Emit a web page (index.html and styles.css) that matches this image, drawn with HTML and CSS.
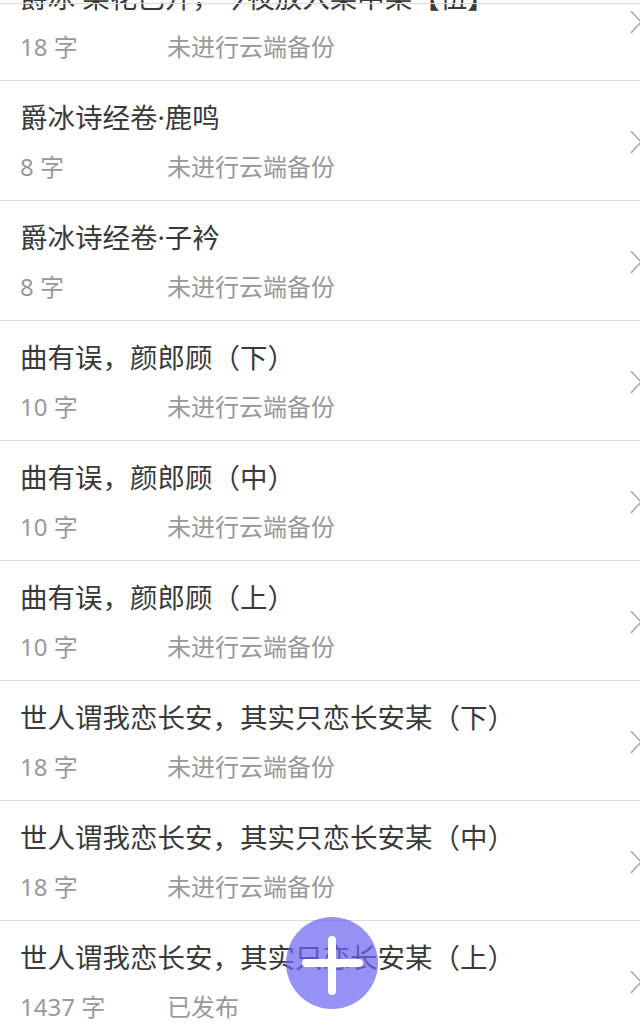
FILE: index.html
```html
<!DOCTYPE html>
<html lang="zh-CN">
<head>
    <meta charset="UTF-8">
    <meta name="viewport" content="width=device-width, initial-scale=1.0">
    <title>作品列表</title>
    <link rel="stylesheet" href="styles.css">
</head>
<body>
    <div class="top-line"></div>

    <ul class="work-list">
        <li class="work-item">
            <div class="work-info">
                <div class="work-title">爵冰·某花已开，今夜放入某中某【伍】</div>
                <div class="work-meta"><span class="work-count">18 字</span><span>未进行云端备份</span></div>
            </div>
            <svg class="chevron" viewBox="0 0 12 24"><polyline points="1,1 11,12 1,23"/></svg>
        </li>
        <li class="work-item">
            <div class="work-info">
                <div class="work-title">爵冰诗经卷·鹿鸣</div>
                <div class="work-meta"><span class="work-count">8 字</span><span>未进行云端备份</span></div>
            </div>
            <svg class="chevron" viewBox="0 0 12 24"><polyline points="1,1 11,12 1,23"/></svg>
        </li>
        <li class="work-item">
            <div class="work-info">
                <div class="work-title">爵冰诗经卷·子衿</div>
                <div class="work-meta"><span class="work-count">8 字</span><span>未进行云端备份</span></div>
            </div>
            <svg class="chevron" viewBox="0 0 12 24"><polyline points="1,1 11,12 1,23"/></svg>
        </li>
        <li class="work-item">
            <div class="work-info">
                <div class="work-title">曲有误，颜郎顾（下）</div>
                <div class="work-meta"><span class="work-count">10 字</span><span>未进行云端备份</span></div>
            </div>
            <svg class="chevron" viewBox="0 0 12 24"><polyline points="1,1 11,12 1,23"/></svg>
        </li>
        <li class="work-item">
            <div class="work-info">
                <div class="work-title">曲有误，颜郎顾（中）</div>
                <div class="work-meta"><span class="work-count">10 字</span><span>未进行云端备份</span></div>
            </div>
            <svg class="chevron" viewBox="0 0 12 24"><polyline points="1,1 11,12 1,23"/></svg>
        </li>
        <li class="work-item">
            <div class="work-info">
                <div class="work-title">曲有误，颜郎顾（上）</div>
                <div class="work-meta"><span class="work-count">10 字</span><span>未进行云端备份</span></div>
            </div>
            <svg class="chevron" viewBox="0 0 12 24"><polyline points="1,1 11,12 1,23"/></svg>
        </li>
        <li class="work-item">
            <div class="work-info">
                <div class="work-title">世人谓我恋长安，其实只恋长安某（下）</div>
                <div class="work-meta"><span class="work-count">18 字</span><span>未进行云端备份</span></div>
            </div>
            <svg class="chevron" viewBox="0 0 12 24"><polyline points="1,1 11,12 1,23"/></svg>
        </li>
        <li class="work-item">
            <div class="work-info">
                <div class="work-title">世人谓我恋长安，其实只恋长安某（中）</div>
                <div class="work-meta"><span class="work-count">18 字</span><span>未进行云端备份</span></div>
            </div>
            <svg class="chevron" viewBox="0 0 12 24"><polyline points="1,1 11,12 1,23"/></svg>
        </li>
        <li class="work-item">
            <div class="work-info">
                <div class="work-title">世人谓我恋长安，其实只恋长安某（上）</div>
                <div class="work-meta"><span class="work-count">1437 字</span><span>已发布</span></div>
            </div>
            <svg class="chevron" viewBox="0 0 12 24"><polyline points="1,1 11,12 1,23"/></svg>
        </li>
    </ul>

    <!-- Add button -->
    <button class="fab" aria-label="新建">
        <svg viewBox="0 0 92 92"><path d="M46 23 V74 M20 46 H73"/></svg>
    </button>
</body>
</html>
```
FILE: styles.css
```css
:root {
    --title: #3a3a3a;
    --meta: #999999;
    --line: #dcdcdc;
}

* {
    box-sizing: border-box;
}

body {
    margin: 0;
    background: #ffffff;
    font-family: "Noto Sans", "Noto Sans CJK SC", sans-serif;
    overflow: hidden;
}

/* Header edge */
.top-line {
    position: fixed;
    top: 3px;
    left: 0;
    right: 0;
    height: 1px;
    background: var(--line);
    z-index: 2;
}

/* List */
.work-list {
    list-style: none;
    margin: -39px 0 0;
    padding: 0;
}

.work-item {
    display: flex;
    align-items: center;
    height: 120px;
    padding: 21px 0 19px 20px;
    border-bottom: 1px solid var(--line);
}

.work-info {
    flex: 1;
    min-width: 0;
}

.work-title {
    font-size: 27.5px;
    line-height: 32px;
    color: var(--title);
    white-space: nowrap;
}

.work-meta {
    margin-top: 19px;
    font-size: 24px;
    line-height: 28px;
    color: var(--meta);
    white-space: nowrap;
}

.work-count {
    display: inline-block;
    width: 147px;
}

.chevron {
    width: 12px;
    height: 24px;
    margin-right: -2px;
    flex-shrink: 0;
    fill: none;
    stroke: #aaaaaa;
    stroke-width: 1.6;
}

/* Floating add button */
.fab {
    position: fixed;
    left: 286px;
    top: 917px;
    width: 92px;
    height: 92px;
    padding: 0;
    border: none;
    border-radius: 50%;
    background: rgba(107, 100, 241, 0.71);
}

.fab svg {
    display: block;
    width: 92px;
    height: 92px;
    fill: none;
    stroke: #ffffff;
    stroke-width: 8;
    stroke-linecap: round;
}
```
